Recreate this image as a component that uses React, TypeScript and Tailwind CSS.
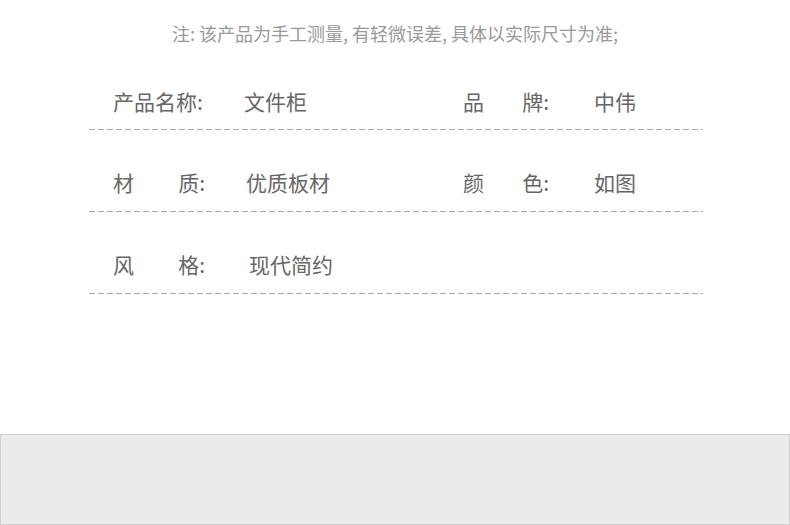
export default function App() {
  const rows: [string, string, string, string?, string?][] = [
    ['产品名称:', '文件柜', 'ml-[39px]', '品牌:', '中伟'],
    ['材质:', '优质板材', 'ml-[41px]', '颜色:', '如图'],
    ['风格:', '现代简约', 'ml-[44px]'],
  ]

  function Label({ text, w }: { text: string; w: string }) {
    if (text.length === 3) {
      return (
        <span className={`flex justify-between ${w}`}>
          <span>{text[0]}</span>
          <span>{text.slice(1)}</span>
        </span>
      )
    }
    return <span className={w}>{text}</span>
  }

  return (
    <div className="h-[525px] w-[790px] bg-white flex flex-col overflow-hidden font-['Noto_Sans_CJK_SC','Noto_Sans',sans-serif]">
      {/* 注 */}
      <p className="pt-[22px] text-center text-[18px] leading-[22px] text-[#999999]">
        注: 该产品为手工测量, 有轻微误差, 具体以实际尺寸为准;
      </p>

      {/* 参数表 */}
      <div className="mx-[89px] mt-[5px] w-[614px]">
        {rows.map(([l1, v1, gap, l2, v2], i) => (
          <div key={i}>
            <div className={`flex pl-[24px] pt-[37px] text-[21px] leading-[30px] text-[#666666] ${i === 0 ? 'pb-[13px]' : 'pb-[14px]'}`}>
              <div className="flex w-[350px]">
                <Label text={l1} w="w-[92px]" />
                <span className={gap}>{v1}</span>
              </div>
              {l2 && (
                <div className="flex">
                  <Label text={l2} w="w-[86px]" />
                  <span className="ml-[45px]">{v2}</span>
                </div>
              )}
            </div>
            <div className="h-px bg-[repeating-linear-gradient(90deg,#a8a8a8_0,#a8a8a8_6px,transparent_6px,transparent_9px)]" />
          </div>
        ))}
      </div>

      <div className="mt-auto h-[91px] border border-[#cfcfcf] bg-[#ebebeb]" />
    </div>
  )
}
